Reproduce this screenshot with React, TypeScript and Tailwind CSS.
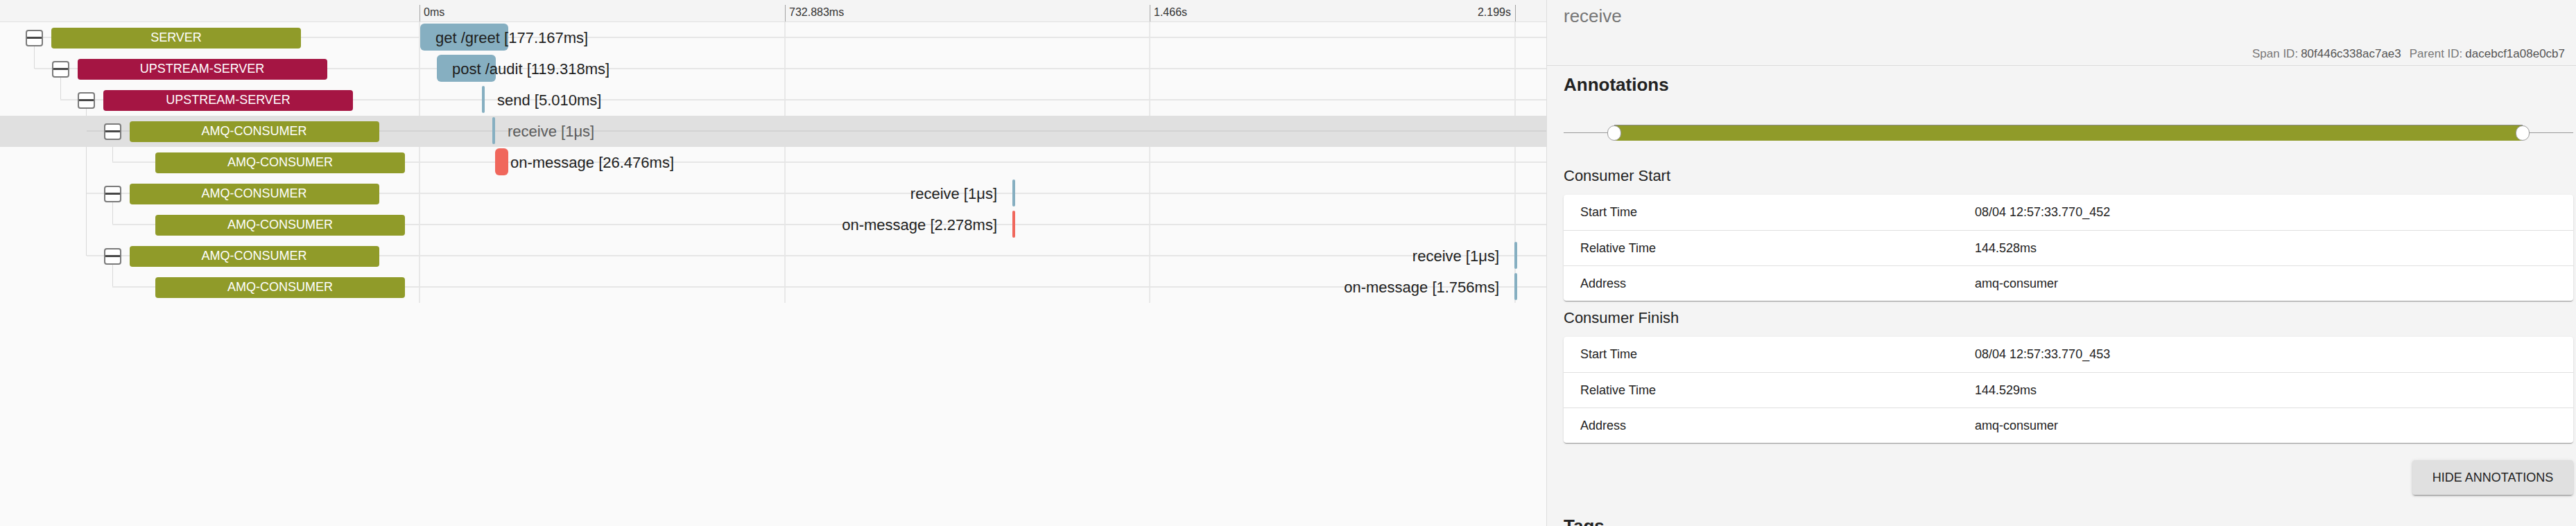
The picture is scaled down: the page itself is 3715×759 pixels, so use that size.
import React from "react";

const OLIVE = "#909b29";
const CRIMSON = "#a51543";
const BLUE = "#86afc1";
const RED = "#f0675c";

const ROW_H = 45;
const PANEL_W = 2230;

type Row = {
  name: string;
  color: string;
  depth: number;
  kids: boolean;
  selected?: boolean;
  span: { left: number; width: number; color: string; label: string; flip?: boolean };
};

const rows: Row[] = [
  { name: "SERVER", color: OLIVE, depth: 0, kids: true, span: { left: 606, width: 127, color: BLUE, label: "get /greet [177.167ms]" } },
  { name: "UPSTREAM-SERVER", color: CRIMSON, depth: 1, kids: true, span: { left: 630, width: 85, color: BLUE, label: "post /audit [119.318ms]" } },
  { name: "UPSTREAM-SERVER", color: CRIMSON, depth: 2, kids: true, span: { left: 695, width: 4, color: BLUE, label: "send [5.010ms]" } },
  { name: "AMQ-CONSUMER", color: OLIVE, depth: 3, kids: true, selected: true, span: { left: 710, width: 4, color: BLUE, label: "receive [1μs]" } },
  { name: "AMQ-CONSUMER", color: OLIVE, depth: 4, kids: false, span: { left: 714, width: 19, color: RED, label: "on-message [26.476ms]" } },
  { name: "AMQ-CONSUMER", color: OLIVE, depth: 3, kids: true, span: { left: 1460, width: 4, color: BLUE, label: "receive [1μs]", flip: true } },
  { name: "AMQ-CONSUMER", color: OLIVE, depth: 4, kids: false, span: { left: 1460, width: 4, color: RED, label: "on-message [2.278ms]", flip: true } },
  { name: "AMQ-CONSUMER", color: OLIVE, depth: 3, kids: true, span: { left: 2184, width: 4, color: BLUE, label: "receive [1μs]", flip: true } },
  { name: "AMQ-CONSUMER", color: OLIVE, depth: 4, kids: false, span: { left: 2184, width: 4, color: BLUE, label: "on-message [1.756ms]", flip: true } },
];

const ticks = [
  { x: 605, label: "0ms", right: false },
  { x: 1132, label: "732.883ms", right: false },
  { x: 1658, label: "1.466s", right: false },
  { x: 2185, label: "2.199s", right: true },
];

// vertical tree guides: from a parent's box down to its last child's centre
function treeGuides() {
  const out: { x: number; top: number; height: number }[] = [];
  rows.forEach((r, i) => {
    if (!r.kids) return;
    let last = i;
    for (let j = i + 1; j < rows.length && rows[j].depth > r.depth; j++) {
      if (rows[j].depth === r.depth + 1) last = j;
    }
    const top = i * ROW_H + 34;
    out.push({ x: 49 + 37.5 * r.depth, top, height: last * ROW_H + 22 - top });
  });
  return out;
}

const CollapseBox = () => (
  <div className="relative z-10 flex h-[24px] w-[25px] shrink-0 items-center rounded-[4px] border-2 border-[#7a7a7a] bg-white">
    <div className="h-[3px] w-full bg-[#474747]" />
  </div>
);

const TraceRow = ({ row }: { row: Row }) => {
  const lineStart = row.depth === 0 ? 37 : 12 + 37.5 * row.depth;
  const s = row.span;
  return (
    <div className={`relative flex h-[45px] items-center ${row.selected ? "bg-[#e0e0e0]" : ""}`}>
      <div
        className={`absolute right-0 top-[21px] h-[2px] ${row.selected ? "bg-[#d3d3d3]" : "bg-[#e6e6e6]"}`}
        style={{ left: lineStart }}
      />
      <div className="flex items-center gap-[12px]" style={{ paddingLeft: 37 + 37.5 * row.depth }}>
        {row.kids ? <CollapseBox /> : <div className="w-[25px]" />}
        <div
          className="relative z-10 flex h-[30px] w-[360px] items-center justify-center rounded-[4px] text-[18px] text-white"
          style={{ backgroundColor: row.color }}
        >
          {row.name}
        </div>
      </div>
      <div
        className={`absolute top-[2px] h-[39px] ${s.width > 10 ? "rounded-[6px]" : "rounded-full"}`}
        style={{ left: s.left, width: s.width, backgroundColor: s.color }}
      />
      <div
        className={`absolute top-0 flex h-[45px] items-center whitespace-nowrap text-[22px] ${row.selected ? "text-[#5c5c5c]" : "text-[#1e1e1e]"}`}
        style={s.flip ? { right: PANEL_W - s.left + 22 } : { left: s.left + 22 }}
      >
        {s.label}
      </div>
    </div>
  );
};

const Timeline = () => (
  <div className="h-full w-[2231px] shrink-0 border-r border-[#dedede] bg-[#fafafa]">
    <div className="relative h-[32px] w-[2230px] border-b border-[#e0e0e0] bg-[#f4f4f4]">
      {ticks.map((t) => (
        <React.Fragment key={t.label}>
          <div className="absolute bottom-0 h-[24px] w-[1px] bg-[#a3a3a3]" style={{ left: t.x }} />
          <div
            className="absolute top-[9px] text-[16px] leading-[18px] text-[#333]"
            style={t.right ? { right: PANEL_W - t.x + 6 } : { left: t.x + 6 }}
          >
            {t.label}
          </div>
        </React.Fragment>
      ))}
    </div>
    <div className="relative w-[2230px]">
      {ticks.map((t) => (
        <div key={t.label} className="absolute top-0 z-0 h-full w-[2px] bg-[#e8e8e8]" style={{ left: t.x - 1 }} />
      ))}
      {treeGuides().map((g, i) => (
        <div key={i} className="absolute w-[1px] bg-[#d9d9d9]" style={{ left: g.x, top: g.top, height: g.height }} />
      ))}
      {rows.map((r, i) => (
        <TraceRow key={i} row={r} />
      ))}
    </div>
  </div>
);

const AnnotationCard = ({ items }: { items: [string, string][] }) => (
  <div className="rounded-[4px] bg-white shadow-[0_2px_1px_-1px_rgba(0,0,0,0.2),0_1px_1px_0_rgba(0,0,0,0.14),0_1px_3px_0_rgba(0,0,0,0.12)]">
    {items.map(([k, v], i) => (
      <div
        key={k}
        className={`grid h-[51px] grid-cols-[569px_1fr] items-center text-[18px] text-[#222] ${i > 0 ? "border-t border-[#e0e0e0]" : ""}`}
      >
        <div className="px-[24px]">{k}</div>
        <div className="px-[24px]">{v}</div>
      </div>
    ))}
  </div>
);

const Detail = () => (
  <div className="flex h-full flex-1 flex-col bg-[#f4f4f4] pl-[24px] pr-[4px]">
    <div className="-ml-[24px] -mr-[4px] flex h-[95px] shrink-0 flex-col border-b border-[#dcdcdc] pl-[24px] pr-[16px]">
      <div className="mt-[8px] text-[26px] leading-[30px] text-[#767676]">receive</div>
      <div className="mt-[30px] flex justify-end gap-[12px] text-[17px] leading-[19px]">
        <span>
          <span className="text-[#777]">Span ID:</span>
          <span className="ml-[4px] text-[#555]">80f446c338ac7ae3</span>
        </span>
        <span>
          <span className="text-[#777]">Parent ID:</span>
          <span className="ml-[4px] text-[#555]">dacebcf1a08e0cb7</span>
        </span>
      </div>
    </div>
    <div className="mt-[12px] text-[26px] font-bold leading-[30px] text-[#222]">Annotations</div>
    <div className="relative mt-[43px] h-[24px] shrink-0">
      <div className="absolute left-0 right-0 top-[11px] h-[1px] bg-[#9a9a9a]" />
      <div className="absolute left-[73px] right-[73px] top-0 h-[23px] border-t border-[#8a8a8a]" style={{ backgroundColor: OLIVE }} />
      <div className="absolute left-[63px] top-[1px] h-[22px] w-[20px] rounded-full border border-[#9a9a9a] bg-white" />
      <div className="absolute right-[63px] top-[1px] h-[22px] w-[20px] rounded-full border border-[#9a9a9a] bg-white" />
    </div>
    <div className="mt-[37px] text-[22px] leading-[26px] text-[#222]">Consumer Start</div>
    <div className="mt-[14px]">
      <AnnotationCard
        items={[
          ["Start Time", "08/04 12:57:33.770_452"],
          ["Relative Time", "144.528ms"],
          ["Address", "amq-consumer"],
        ]}
      />
    </div>
    <div className="mt-[12px] text-[22px] leading-[26px] text-[#222]">Consumer Finish</div>
    <div className="mt-[14px]">
      <AnnotationCard
        items={[
          ["Start Time", "08/04 12:57:33.770_453"],
          ["Relative Time", "144.529ms"],
          ["Address", "amq-consumer"],
        ]}
      />
    </div>
    <div className="mt-[25px] flex justify-end">
      <button className="h-[50px] w-[232px] rounded-[4px] bg-[#e0e0e0] text-[18px] uppercase text-[#222] shadow-[0_3px_1px_-2px_rgba(0,0,0,0.2),0_2px_2px_0_rgba(0,0,0,0.14),0_1px_5px_0_rgba(0,0,0,0.12)]">
        Hide Annotations
      </button>
    </div>
    <div className="mt-[30px] text-[26px] font-bold leading-[30px] text-[#222]">Tags</div>
  </div>
);

export default function App() {
  return (
    <div className="flex h-[759px] w-[3715px] overflow-hidden font-['Liberation_Sans',Arial,sans-serif]">
      <Timeline />
      <Detail />
    </div>
  );
}
